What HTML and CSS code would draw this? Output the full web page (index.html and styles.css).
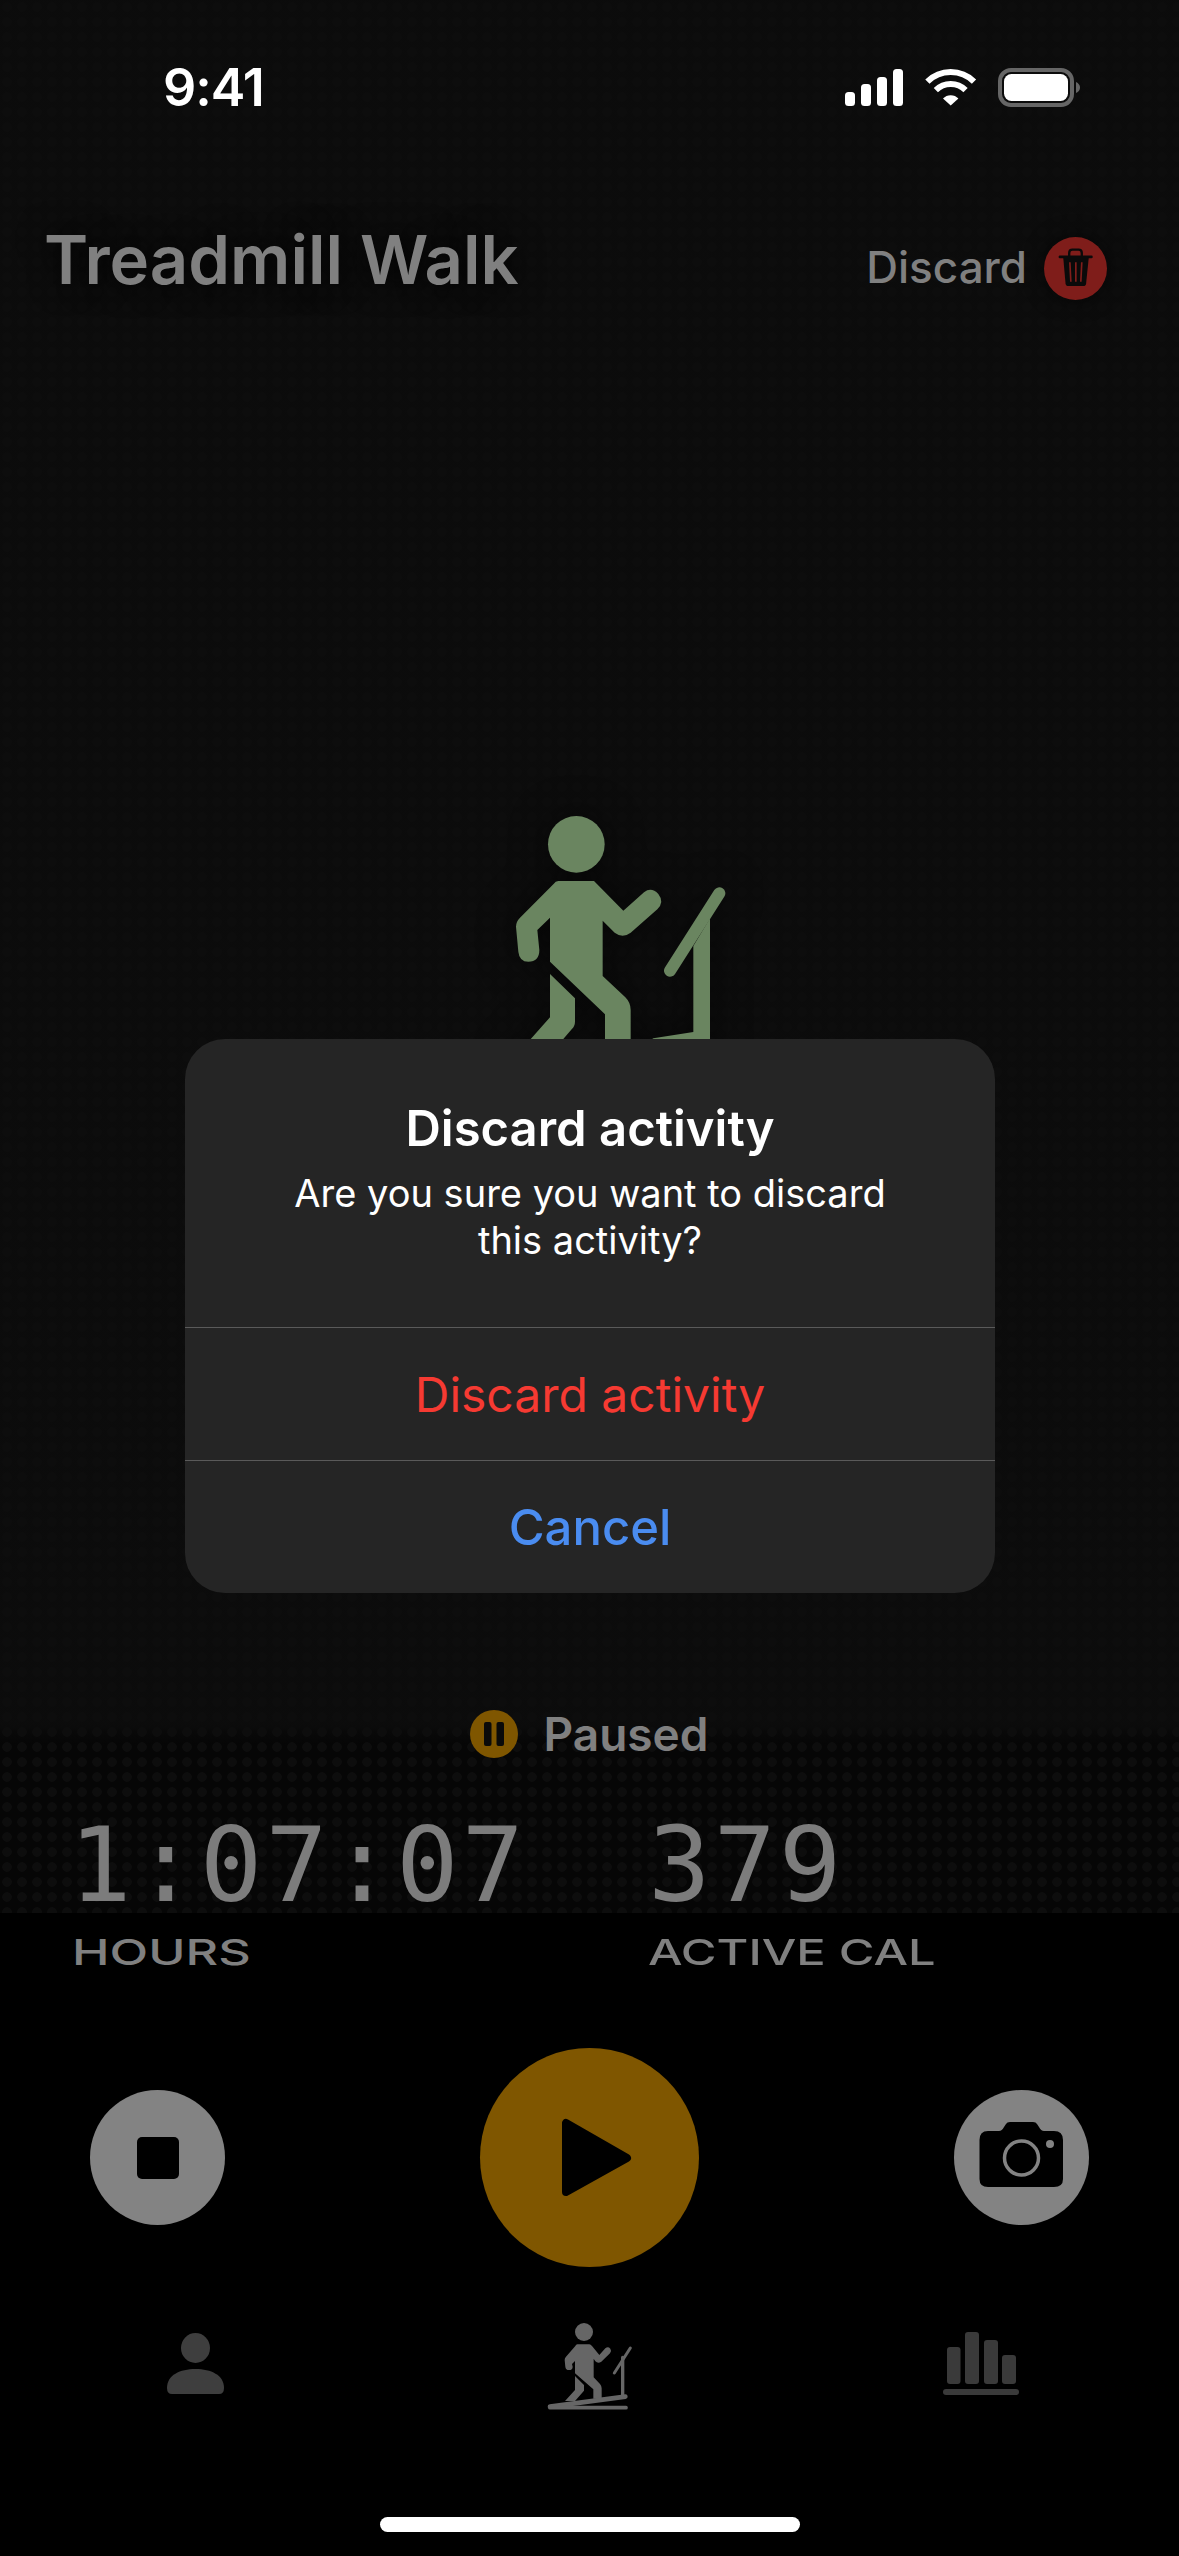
FILE: index.html
```html
<!DOCTYPE html>
<html lang="en">
<head>
<meta charset="utf-8">
<title>Treadmill Walk</title>
<link rel="stylesheet" href="styles.css">
</head>
<body>
<main class="screen">
  <div class="statusbar">
    <span class="clock">9:41</span>
    <svg class="status-icons" viewBox="0 0 236 39" width="236" height="39">
      <g fill="#fff">
        <rect x="0" y="24" width="10" height="14" rx="3.5"/>
        <rect x="16" y="16" width="10" height="22" rx="3.5"/>
        <rect x="32" y="9" width="10" height="29" rx="3.5"/>
        <rect x="48" y="1" width="10" height="37" rx="3.5"/>
        <path d="M105.7 37.5 L98 30.5 A10.5 10.5 0 0 1 113.4 30.5 Z"/>
      </g>
      <g fill="none" stroke="#fff" stroke-width="6">
        <path d="M82.4 13.7 A33 33 0 0 1 129 13.7"/>
        <path d="M90.85 22.15 A21 21 0 0 1 120.55 22.15"/>
      </g>
      <rect x="155" y="2" width="72" height="35" rx="11" fill="none" stroke="#666" stroke-width="4"/>
      <rect x="159" y="6" width="64" height="27" rx="7.5" fill="#fff"/>
      <path d="M231 14 Q235 16 235 19.5 Q235 23 231 25 Z" fill="#666"/>
    </svg>
  </div>

  <header class="header">
    <h1 class="title">Treadmill Walk</h1>
    <div class="discard">
      <span class="discard-label">Discard</span>
      <span class="trash">
        <svg viewBox="72 50 190 190" width="63" height="63">
          <path d="M148 108 V98 Q148 88 158 88 H176 Q186 88 186 98 V108" fill="none" stroke="#0a0a0a" stroke-width="7"/>
          <path d="M120 110 H215" stroke="#0a0a0a" stroke-width="8" stroke-linecap="round"/>
          <path d="M130 112 L137 190 Q138 198 146 198 H190 Q198 198 199 190 L207 112 Z" fill="#0a0a0a"/>
          <path d="M150 126 L153 185 M168 126 V185 M186 126 L183 185" stroke="#7f1d1a" stroke-width="5"/>
        </svg>
      </span>
    </div>
  </header>

  <section class="hero">
    <svg class="walker" viewBox="0 0 1020 870" width="340" height="290">
      <g fill="#6a8560">
        <circle cx="409" cy="193" r="85"/>
        <path d="M355 303 H462 L550 392 L612 337 Q634 320 655 342 Q674 366 652 388 L572 458 Q548 476 524 458 L488 422 V588 L556 652 Q572 668 572 690 V870 H495 V703 L330 545 V413 L292 450 L298 510 Q298 545 265 545 Q238 545 235 515 L228 440 Q228 425 240 413 L340 313 Q347 303 355 303 Z"/>
        <path d="M330 582 L405 655 V725 Q405 738 395 748 L290 870 H190 L330 712 Z"/>
        <path d="M760 498 L810 415 V870 H500 L640 775 L760 756 Z"/>
      </g>
      <path d="M690 572 L838 340" stroke="#6a8560" stroke-width="36" stroke-linecap="round"/>
    </svg>
  </section>

  <div class="paused">
    <svg class="pause-icon" viewBox="0 0 48 48" width="48" height="48">
      <circle cx="24" cy="24" r="24" fill="#7f5600"/>
      <rect x="14" y="12" width="7.5" height="24" rx="2" fill="#0a0a0a"/>
      <rect x="26.5" y="12" width="7.5" height="24" rx="2" fill="#0a0a0a"/>
    </svg>
    <span class="paused-label">Paused</span>
  </div>

  <section class="metrics">
    <div class="metric">
      <div class="metric-value">1:07:07</div>
      <div class="metric-label label-hours">HOURS</div>
    </div>
    <div class="metric">
      <div class="metric-value">379</div>
      <div class="metric-label label-cal">ACTIVE CAL</div>
    </div>
  </section>

  <section class="controls">
    <div class="round-btn"><span class="stop"></span></div>
    <div class="play-btn">
      <svg viewBox="0 0 219 219" width="219" height="219">
        <polygon points="86,75 86,144 147,110" fill="#000" stroke="#000" stroke-width="8" stroke-linejoin="round"/>
      </svg>
    </div>
    <div class="round-btn">
      <svg viewBox="0 0 135 135" width="135" height="135">
        <path d="M34 41 H45 Q48 41 50 37 L52 34 Q53 32 56 32 H79 Q82 32 83 34 L85 37 Q87 41 90 41 H100 Q109 41 109 50 V89 Q109 97 100 97 H34 Q25.5 97 25.5 89 V50 Q25.5 41 34 41 Z" fill="#000"/>
        <circle cx="67.5" cy="68" r="17" fill="none" stroke="#838383" stroke-width="3.5"/>
        <circle cx="96" cy="54" r="4" fill="#838383"/>
      </svg>
    </div>
  </section>

  <nav class="tabs">
    <svg viewBox="0 0 57 120" width="57" height="120">
      <g fill="#3e3e3e">
        <ellipse cx="28.5" cy="48" rx="14.5" ry="15"/>
        <path d="M0 88 C0 75 13 69 28.5 69 S57 75 57 88 Q57 94 52 94 H5 Q0 94 0 88 Z"/>
      </g>
    </svg>
    <svg viewBox="0 0 390 360" width="130" height="120">
      <g fill="#666">
        <circle cx="192" cy="96" r="27"/>
        <path d="M172 133 H208 Q212 133 216 138 L238 165 L256 145 Q264 138 271 146 Q276 153 270 160 L244 185 Q234 192 226 184 L221 176 V232 L240 252 Q245 258 245 265 V296 H220 V268 L165 220 V183 L156 192 L158 200 Q158 210 147 210 Q137 210 136 200 L134 180 Q134 174 138 170 L166 138 Q168 133 172 133 Z"/>
        <path d="M165 228 L192 255 V272 L165 303 H135 L165 270 Z"/>
      </g>
      <g fill="none" stroke="#666" stroke-linecap="round">
        <path d="M90 320 L316 290" stroke-width="14"/>
        <path d="M90 323 H318" stroke-width="11"/>
        <path d="M308 290 V172" stroke-width="10"/>
        <path d="M283 219 L331 144" stroke-width="9"/>
      </g>
    </svg>
    <svg viewBox="0 0 76 120" width="76" height="120">
      <g fill="#3a3a3a">
        <rect x="4" y="47" width="13.5" height="37" rx="3"/>
        <rect x="22" y="32" width="14" height="52" rx="3"/>
        <rect x="41" y="40" width="14" height="44" rx="3"/>
        <rect x="59" y="55" width="14" height="29" rx="3"/>
        <rect x="0" y="89" width="76" height="6" rx="3"/>
      </g>
    </svg>
  </nav>

  <div class="home-indicator"></div>

  <div class="dialog">
    <div class="dialog-head">
      <h2 class="dialog-title">Discard activity</h2>
      <p class="dialog-message">Are you sure you want to discard<br>this activity?</p>
    </div>
    <div class="dialog-action danger">Discard activity</div>
    <div class="dialog-action primary">Cancel</div>
  </div>
</main>
</body>
</html>
```

FILE: styles.css
```css
* { box-sizing: border-box; }
html, body { margin: 0; padding: 0; background: #000; }
.screen {
  position: relative;
  width: 1179px;
  height: 2556px;
  overflow: hidden;
  font-family: Inter, "Liberation Sans", sans-serif;
  background-color: #060606;
  background-image:
    linear-gradient(to bottom, transparent 1913px, #000 1913px),
    linear-gradient(to bottom, rgba(13,13,13,.8) 1725px, rgba(13,13,13,.3) 1735px, transparent 1745px),
    radial-gradient(circle at 7px 7px, rgba(255,255,255,.026) 4.5px, transparent 5px);
  background-size: 100% 100%, 100% 100%, 15px 15px;
}
.statusbar {
  height: 175px;
  padding: 0 98px 0 163px;
  display: flex;
  align-items: center;
  justify-content: space-between;
}
.clock { font-size: 52px; font-weight: 600; color: #fff; letter-spacing: -1px; }
.status-icons { display: block; }

.header {
  height: 187px;
  padding: 0 72px 0 44px;
  display: flex;
  align-items: center;
  justify-content: space-between;
}
.title {
  margin: 0 0 18px;
  font-size: 67px;
  font-weight: 600;
  line-height: 80px;
  color: #808080;
  text-shadow: 0 0 30px #000;
}
.discard { display: flex; align-items: center; gap: 17px; }
.discard-label { font-size: 44px; font-weight: 500; color: #808080; margin-bottom: 3px; }
.trash {
  width: 63px;
  height: 63px;
  border-radius: 50%;
  background: #7f1d1a;
  box-shadow: 0 0 20px rgba(0,0,0,.6);
  display: block;
}
.trash svg { display: block; }

.hero { height: 1348px; padding: 418px 0 0 440px; }
.walker { display: block; filter: drop-shadow(0 0 18px rgba(0,0,0,.55)); }

.paused {
  height: 48px;
  display: flex;
  align-items: center;
  justify-content: center;
  gap: 25px;
}
.pause-icon { display: block; }
.paused-label { font-size: 46px; font-weight: 600; color: #808080; line-height: 48px; }

.metrics {
  margin-top: 57px;
  padding-left: 69px;
  display: grid;
  grid-template-columns: 579px 1fr;
}
.metric-value {
  font-family: "DejaVu Sans Mono", "Liberation Mono", monospace;
  font-size: 104px;
  line-height: 100px;
  letter-spacing: 2.8px;
  color: #7c7c7c;
}
.metric-label {
  margin-top: 17px;
  font-size: 36px;
  line-height: 40px;
  font-weight: 500;
  color: #808080;
  transform-origin: left center;
}
.label-hours { transform: translateX(3px) scaleX(1.4); }
.label-cal { transform: scaleX(1.355); }

.controls {
  margin-top: 76px;
  height: 219px;
  padding: 0 90px;
  display: flex;
  align-items: center;
  justify-content: space-between;
}
.round-btn {
  width: 135px;
  height: 135px;
  border-radius: 50%;
  background: #838383;
  display: flex;
  align-items: center;
  justify-content: center;
}
.round-btn svg, .play-btn svg { display: block; }
.stop { width: 42px; height: 42px; border-radius: 5px; background: #000; }
.play-btn { width: 219px; height: 219px; border-radius: 50%; background: #7f5600; }

.tabs {
  margin-top: 33px;
  height: 120px;
  padding-left: 167px;
  display: grid;
  grid-template-columns: 353px 423px 76px;
}
.tabs svg { display: block; }

.home-indicator {
  margin: 97px auto 0;
  width: 420px;
  height: 15px;
  border-radius: 8px;
  background: #fff;
}

.dialog {
  position: absolute;
  top: 1039px;
  left: 185px;
  width: 810px;
  height: 554px;
  border-radius: 40px;
  background: #252525;
  color: #fff;
  text-align: center;
  overflow: hidden;
}
.dialog-head { height: 288px; padding-top: 60px; }
.dialog-title {
  margin: 0;
  font-size: 49px;
  font-weight: 600;
  line-height: 60px;
}
.dialog-message {
  margin: 0;
  padding-top: 11px;
  font-size: 38px;
  font-weight: 400;
  line-height: 47px;
}
.dialog-action {
  height: 133px;
  border-top: 1px solid #5a5a5a;
  display: flex;
  align-items: center;
  justify-content: center;
}
.danger { color: #f63a32; font-weight: 400; font-size: 48px; }
.primary { color: #4a8cf0; font-weight: 500; font-size: 49px; }
```
